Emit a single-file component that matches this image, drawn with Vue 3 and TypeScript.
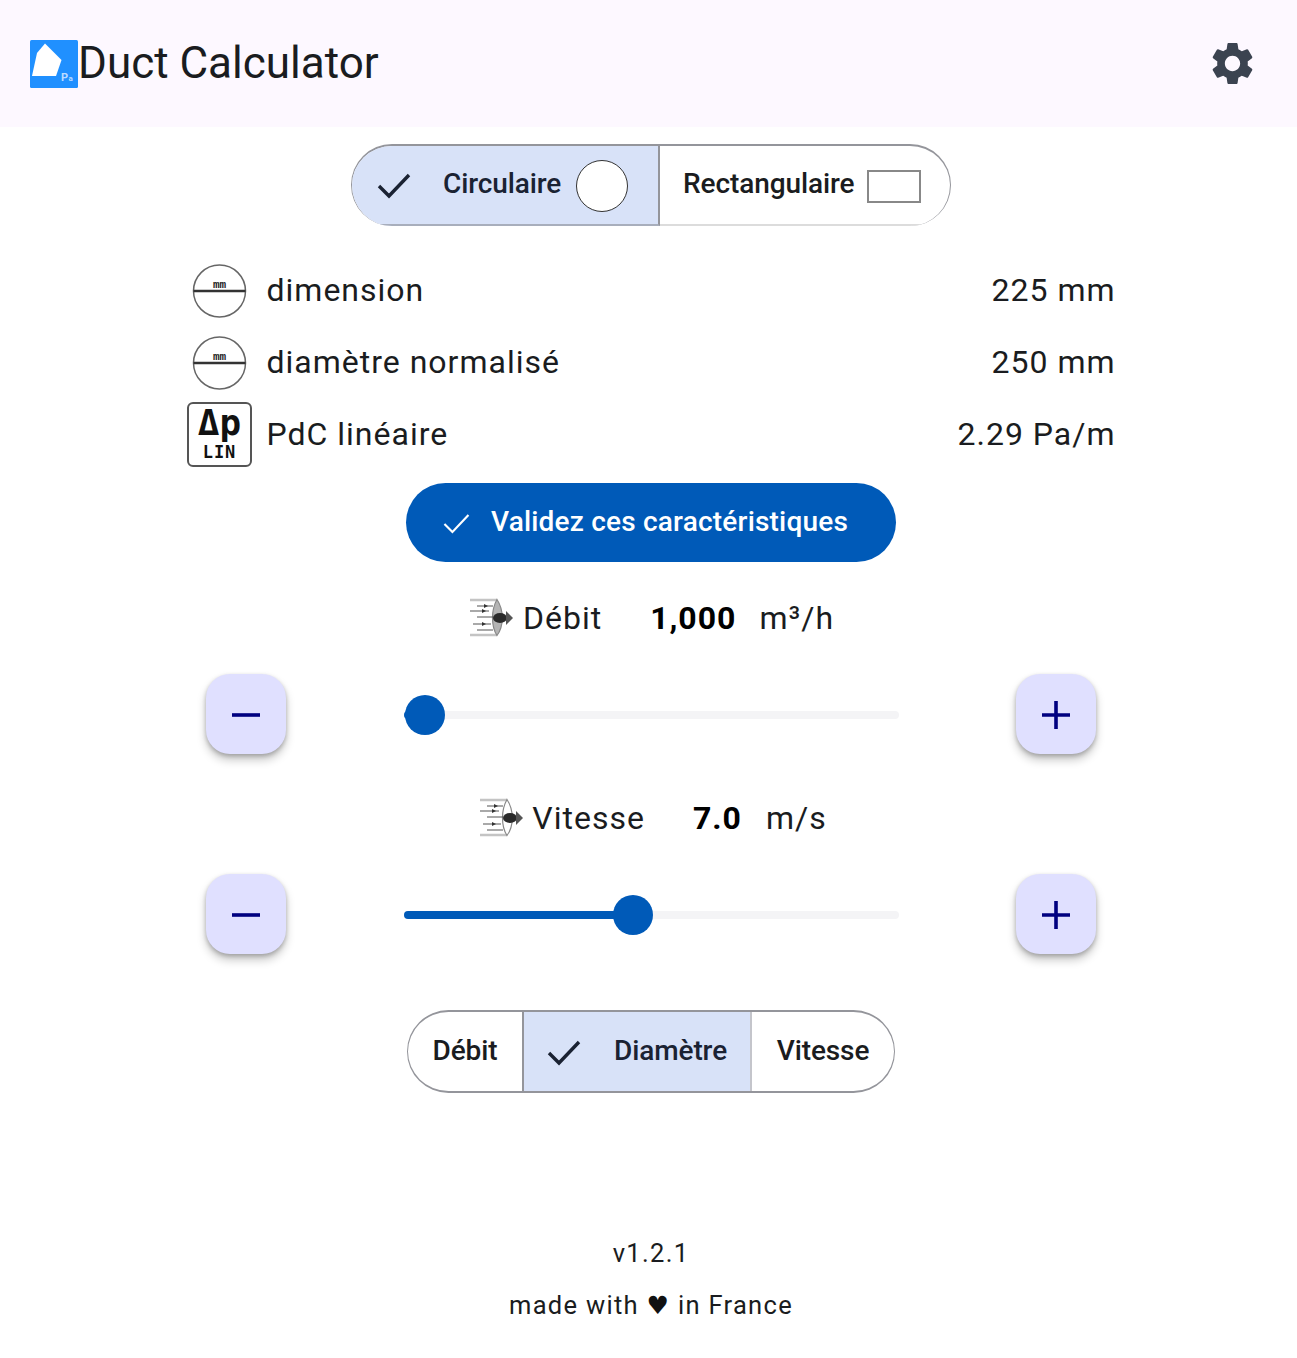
<script setup lang="ts">
const settingsPath = 'M19.14 12.94c.04-.3.06-.61.06-.94 0-.32-.02-.64-.07-.94l2.03-1.58c.18-.14.23-.41.12-.61l-1.92-3.32c-.12-.22-.37-.29-.59-.22l-2.39.96c-.5-.38-1.03-.7-1.62-.94l-.36-2.54c-.04-.24-.24-.41-.48-.41h-3.84c-.24 0-.43.17-.47.41l-.36 2.54c-.59.24-1.13.57-1.62.94l-2.39-.96c-.22-.08-.47 0-.59.22L2.74 8.87c-.12.21-.08.47.12.61l2.03 1.58c-.05.3-.09.63-.09.94s.02.64.07.94l-2.03 1.58c-.18.14-.23.41-.12.61l1.92 3.32c.12.22.37.29.59.22l2.39-.96c.5.38 1.03.7 1.62.94l.36 2.54c.05.24.24.41.48.41h3.84c.24 0 .44-.17.47-.41l.36-2.54c.59-.24 1.13-.56 1.62-.94l2.39.96c.22.08.47 0 .59-.22l1.92-3.32c.12-.22.07-.47-.12-.61l-2.01-1.58zM12 15.6c-1.98 0-3.6-1.62-3.6-3.6s1.62-3.6 3.6-3.6 3.6 1.62 3.6 3.6-1.62 3.6-3.6 3.6z'
const rows = [
  { label: 'dimension', value: '225 mm', icon: 'circle' },
  { label: 'diamètre normalisé', value: '250 mm', icon: 'circle' },
  { label: 'PdC linéaire', value: '2.29 Pa/m', icon: 'dp' },
]
const sliders = [
  { label: 'Débit', value: '1,000', unit: 'm³/h', pos: 21, flowClass: 'metric-debit', fan: '#b4b4b4' },
  { label: 'Vitesse', value: '7.0', unit: 'm/s', pos: 229, flowClass: 'metric-vitesse', fan: '#ffffff' },
]
</script>

<template>
  <div class="page">
    <header class="bar">
      <div class="brand">
        <svg class="logo" viewBox="0 0 48 48" width="48" height="48">
          <rect width="48" height="48" rx="1.5" fill="#2090ff" />
          <path d="M15 3.5 L31.5 20 L26 36 L2 36 L7 13 Z" fill="#fff" />
          <text x="31" y="40.5" font-size="11" font-weight="700" fill="#bcdcff" font-family="Roboto, sans-serif">P</text>
          <text x="38.5" y="40.5" font-size="8" font-weight="700" fill="#bcdcff" font-family="Roboto, sans-serif">a</text>
        </svg>
        <h1 class="title">Duct Calculator</h1>
      </div>
      <svg class="gear" viewBox="0 0 24 24" width="51" height="51"><path :d="settingsPath" fill="#3b4350" /></svg>
    </header>

    <main class="content">
      <div class="seg seg-shape">
        <div class="seg-item seg-on seg-circ">
          <svg class="check" viewBox="0 0 36 36" width="36" height="36"><path d="M3 19 L13 29 L33 8" fill="none" stroke="#1a2233" stroke-width="3.4" /></svg>
          <span class="seg-label seg-label-circ">Circulaire</span>
          <span class="shape-circle"></span>
        </div>
        <div class="seg-item seg-rect">
          <span class="seg-label">Rectangulaire</span>
          <span class="shape-rect"></span>
        </div>
      </div>

      <div class="specs">
        <div v-for="r in rows" :key="r.label" class="spec">
          <div class="spec-left">
            <span class="spec-icon">
              <svg v-if="r.icon === 'circle'" viewBox="0 0 64 64" width="64" height="64">
                <circle cx="32.5" cy="33" r="26" fill="#fff" stroke="#666" stroke-width="1.5" />
                <line x1="6.5" y1="33" x2="58.5" y2="33" stroke="#333" stroke-width="2.4" />
                <text x="32.5" y="30" text-anchor="middle" font-size="11" font-weight="700" fill="#222" font-family="'Liberation Mono', monospace">mm</text>
              </svg>
              <span v-else class="dp">
                <span class="dp-top">Δp</span>
                <span class="dp-sub">LIN</span>
              </span>
            </span>
            <span class="spec-label">{{ r.label }}</span>
          </div>
          <span class="spec-value">{{ r.value }}</span>
        </div>
      </div>

      <button class="validate">
        <svg viewBox="0 0 36 36" width="36" height="36"><path d="M5 19 L14 28 L32 9" fill="none" stroke="#fff" stroke-width="2.4" /></svg>
        <span class="validate-text">Validez ces caractéristiques</span>
      </button>

      <section v-for="s in sliders" :key="s.label" class="metric" :class="s.flowClass">
        <div class="metric-head">
          <span class="metric-name">
            <svg viewBox="0 0 46 40" width="46" height="40" class="flow">
              <path d="M1 2 H28 M1 37 H28" stroke="#c4c4c4" stroke-width="2.4" fill="none" />
              <path d="M28 1.5 C22 12 22 28 28 37.5 C35 28 35 12 28 1.5 Z" :fill="s.fan" stroke="#888" stroke-width="1.2" />
              <path d="M8 8 H24 M1 13 H20 M8 19 H24 M4 26 H22 M8 32 H24" stroke="#555" stroke-width="1.1" />
              <path d="M15 6 l4 2 -4 2 z M13 11 l4 2 -4 2 z M13 24 l4 2 -4 2 z" fill="#333" />
              <ellipse cx="31" cy="20" rx="7" ry="5" fill="#2a2a2a" />
              <path d="M37 13 L44 20 L37 27 Z" fill="#555" />
            </svg>
            <span>{{ s.label }}</span>
          </span>
          <b class="metric-value">{{ s.value }}</b>
          <span class="metric-unit">{{ s.unit }}</span>
        </div>
        <div class="slider-row">
          <button class="step"><svg viewBox="0 0 32 32" width="32" height="32"><path d="M2 16 H30" stroke="#000080" stroke-width="3.6" /></svg></button>
          <div class="track">
            <div class="track-on" :style="{ width: s.pos + 'px' }"></div>
            <div class="thumb" :style="{ left: s.pos - 20 + 'px' }"></div>
          </div>
          <button class="step"><svg viewBox="0 0 32 32" width="32" height="32"><path d="M2 16 H30 M16 2 V30" stroke="#000080" stroke-width="3.6" /></svg></button>
        </div>
      </section>

      <div class="seg seg-mode">
        <div class="seg-item mode-a"><span class="seg-label">Débit</span></div>
        <div class="seg-item seg-on mode-b">
          <svg class="check" viewBox="0 0 36 36" width="36" height="36"><path d="M3 19 L13 29 L33 8" fill="none" stroke="#1a2233" stroke-width="3.4" /></svg>
          <span class="seg-label">Diamètre</span>
        </div>
        <div class="seg-item mode-c"><span class="seg-label">Vitesse</span></div>
      </div>

      <footer class="foot">
        <p>v1.2.1</p>
        <p>made with <span class="heart">♥</span> in France</p>
      </footer>
    </main>
  </div>
</template>

<style scoped>
.page {
  width: 1297px;
  height: 1358px;
  overflow: hidden;
  background: #fff;
  font-family: Roboto, "Liberation Sans", sans-serif;
  color: #1a1c20;
}
.bar {
  height: 127px;
  background: #fdf8ff;
  display: flex;
  align-items: center;
  justify-content: space-between;
  padding: 0 39px 0 30px;
  box-sizing: border-box;
}
.brand { display: flex; align-items: center; margin-top: -2px; }
.logo { display: block; margin-top: 2px; }
.title { margin: 0; font-size: 44px; font-weight: 400; line-height: 56px; color: #1a1c20; }
.gear { display: block; }
.content {
  padding-left: 5px;
  display: flex;
  flex-direction: column;
  align-items: center;
}
.seg {
  display: flex;
  box-sizing: border-box;
  border: 1px solid #94959b;
  border-width: 2px 1px;
  background: #fff;
  overflow: hidden;
}
.seg-shape { width: 600px; height: 82px; border-radius: 41px; margin-top: 17px; border-bottom-width: 0; }
.seg-mode { width: 488px; height: 83px; border-radius: 42px; margin-top: 56px; }
.seg-item {
  display: flex;
  align-items: center;
  box-sizing: border-box;
  height: 100%;
}
.seg-on { background: #d8e2f8; color: #1a2233; }
.seg-label { font-size: 28px; font-weight: 500; letter-spacing: -0.1px; line-height: 40px; margin-top: -2px; }
.seg-circ { width: 308px; border-right: 2px solid #94959b; border-bottom: 2px solid #a8aebc; padding-left: 24px; }
.seg-label-circ { margin-left: 31px; }
.check { flex: none; }
.shape-circle {
  width: 52px; height: 52px; border-radius: 50%;
  box-sizing: border-box;
  border: 1.5px solid #333;
  background: #fff;
  margin: 2px 0 0 15px;
}
.seg-rect { flex: 1; padding-left: 23px; border-bottom: 2px solid #dcdcdc; }
.shape-rect {
  width: 54px; height: 33px;
  box-sizing: border-box;
  border: 2px solid #888;
  margin: 2px 0 0 13px;
}
.specs {
  width: 928px;
  margin-top: 32px;
  display: flex;
  flex-direction: column;
  gap: 8px;
}
.spec {
  height: 64px;
  display: flex;
  align-items: center;
  justify-content: space-between;
}
.spec-left { display: flex; align-items: center; gap: 15.5px; }
.spec-icon { width: 64px; height: 64px; display: block; }
.spec-icon svg { display: block; }
.spec-label, .spec-value { font-size: 32px; letter-spacing: 1px; line-height: 48px; }
.spec-value { margin-right: -0.5px; }
.dp {
  width: 65px; height: 65px;
  box-sizing: border-box;
  border: 2px solid #555;
  border-radius: 6px;
  display: flex;
  flex-direction: column;
  align-items: center;
  background: #fff;
  color: #111;
}
.dp-top { font-family: "DejaVu Sans Mono", monospace; font-weight: 700; font-size: 36px; line-height: 38px; letter-spacing: 0; }
.dp-sub { font-family: "DejaVu Sans Mono", monospace; font-weight: 700; font-size: 17px; line-height: 18px; margin-top: 1px; letter-spacing: 1px; }
.validate {
  margin-top: 17px;
  width: 490px;
  height: 79px;
  border: none;
  border-radius: 40px;
  background: #005ab8;
  color: #fff;
  display: flex;
  align-items: center;
  padding: 0 0 0 34px;
  gap: 19px;
  font-family: inherit;
  font-size: 28px;
  font-weight: 500;
  letter-spacing: 0.2px;
}
.validate svg { width: 32px; height: 32px; flex: none; }
.validate-text { margin-top: -2px; }
.metric { width: 890px; }
.metric-debit { margin-top: 32px; }
.metric-vitesse { margin-top: 40px; }
.metric-head {
  height: 48px;
  display: flex;
  align-items: center;
  justify-content: center;
  font-size: 32px;
  letter-spacing: 1px;
}
.metric-debit .metric-head { padding-left: 1px; }
.metric-vitesse .metric-head { padding-left: 4px; }
.metric-name { display: flex; align-items: center; gap: 8px; }
.metric-value { font-weight: 700; margin-left: 48px; color: #000; }
.metric-unit { margin-left: 23px; }
.metric-vitesse .metric-name { gap: 7px; }
.metric-vitesse .metric-value { margin-left: 48px; }
.metric-vitesse .metric-unit { margin-left: 24px; }
.flow { display: block; filter: blur(0.4px); }
.slider-row {
  margin-top: 32px;
  height: 80px;
  display: flex;
  align-items: center;
  justify-content: space-between;
}
.step {
  width: 80px; height: 80px;
  border: none;
  border-radius: 24px;
  background: #e0e0ff;
  box-shadow: 0 6px 10px rgba(0,0,0,.22), 0 2px 4px rgba(0,0,0,.22);
  display: flex;
  align-items: center;
  justify-content: center;
  padding: 2px 0 0;
}
.track {
  position: relative;
  width: 495px;
  height: 8px;
  margin-top: 2px;
  border-radius: 4px;
  background: #f4f4f6;
}
.track-on {
  position: absolute;
  left: 0; top: 0;
  height: 8px;
  border-radius: 4px;
  background: #005ab8;
}
.thumb {
  position: absolute;
  top: -16px;
  width: 40px; height: 40px;
  border-radius: 50%;
  background: #005ab8;
}
.foot { margin-top: 144px; text-align: center; font-size: 25.5px; letter-spacing: 1.3px; }
.foot p { margin: 0; line-height: 32px; }
.foot p + p { margin-top: 20px; }
.heart { font-family: "DejaVu Sans", sans-serif; font-size: 25px; line-height: 32px; color: #111; }
.mode-a { width: 116px; border-right: 2px solid #94959b; justify-content: center; }
.mode-b { width: 228px; border-right: 2px solid #c4c5cb; padding-left: 22px; gap: 32px; }
.mode-c { flex: 1; justify-content: center; }
</style>
